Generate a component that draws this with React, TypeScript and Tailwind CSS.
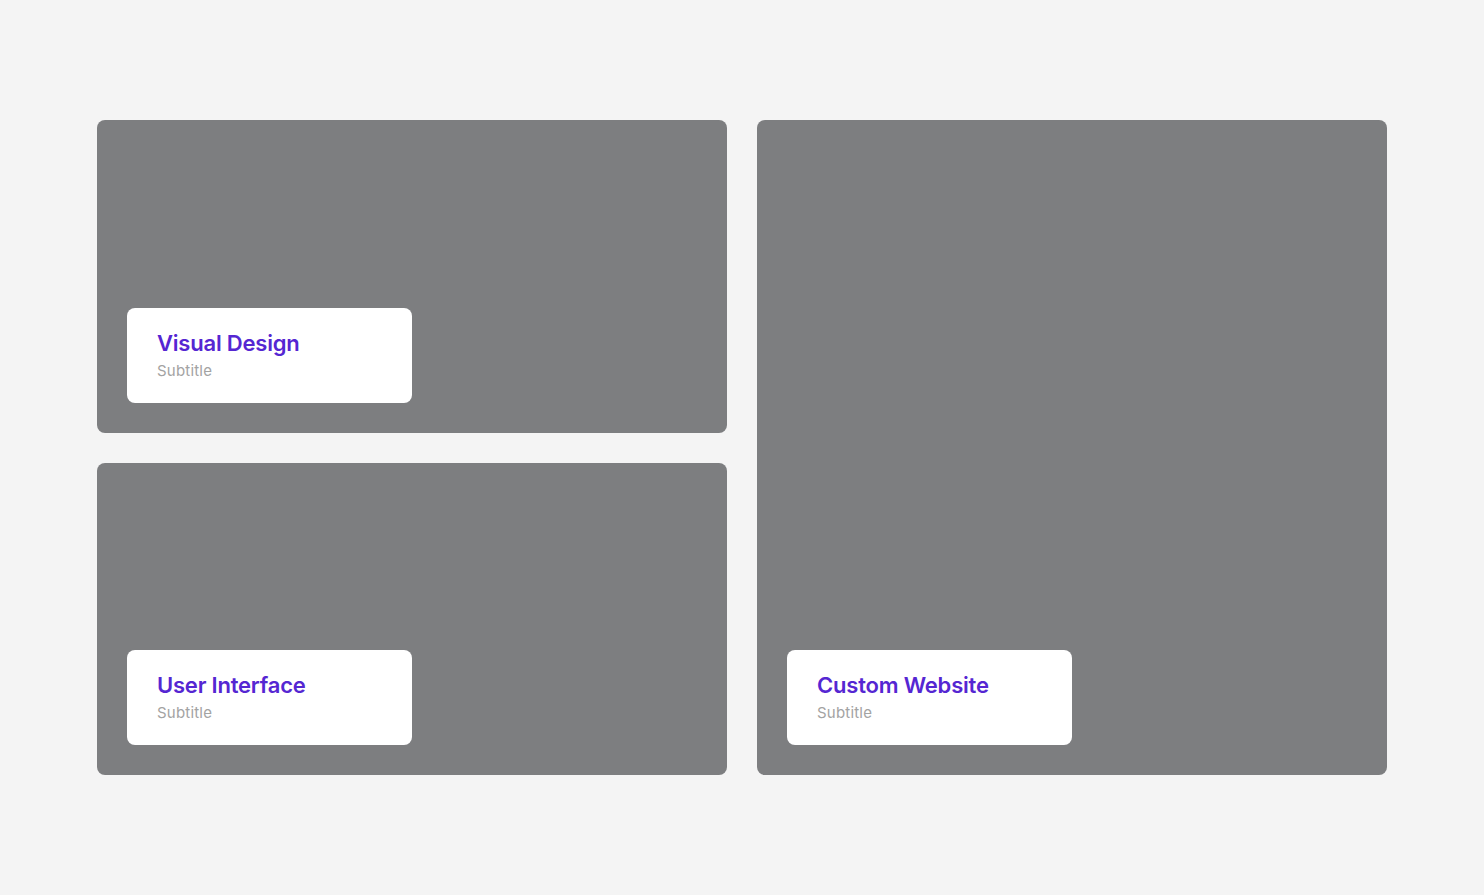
import React from "react";

function Label({ title }: { title: string }) {
  return (
    <div className="w-[285px] h-[95px] bg-white rounded-[8px] px-[30px] pt-[22px] flex flex-col">
      <div className="text-[22px] leading-[26px] font-semibold text-[#5526d2] tracking-[-0.2px]">{title}</div>
      <div className="text-[15px] leading-[20px] mt-[5px] text-[#a3a3a3] tracking-[0.2px]">Subtitle</div>
    </div>
  );
}

export default function App() {
  return (
    <div className="min-h-screen w-full bg-[#f4f4f4] pt-[120px] px-[97px]" style={{ fontFamily: "Inter, 'Noto Sans', sans-serif" }}>
      <div className="grid grid-cols-2 gap-[30px] h-[655px]">
        <div className="flex flex-col gap-[30px]">
          <div className="flex-1 bg-[#7d7e80] rounded-[8px] p-[30px] flex items-end">
            <Label title="Visual Design" />
          </div>
          <div className="flex-1 bg-[#7d7e80] rounded-[8px] p-[30px] flex items-end">
            <Label title="User Interface" />
          </div>
        </div>
        <div className="bg-[#7d7e80] rounded-[8px] p-[30px] flex items-end">
          <Label title="Custom Website" />
        </div>
      </div>
    </div>
  );
}
